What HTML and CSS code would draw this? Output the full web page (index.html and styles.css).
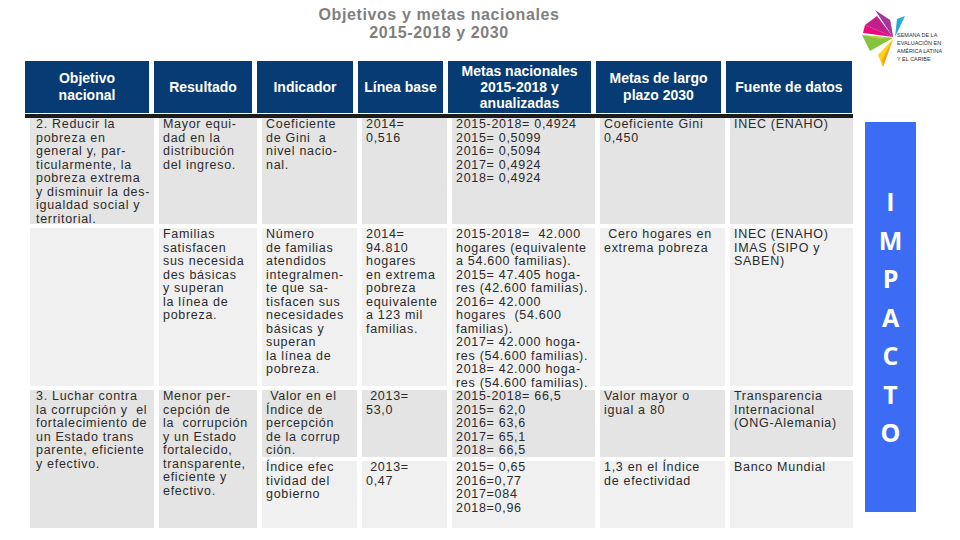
FILE: index.html
```html
<!DOCTYPE html>
<html lang="es">
<head>
<meta charset="utf-8">
<title>Objetivos y metas nacionales</title>
<link rel="stylesheet" href="styles.css">
</head>
<body>
<div class="slide">
  <main class="content">
    <h1 class="title">Objetivos y metas nacionales<br>2015-2018 y 2030</h1>
    <div class="thead">
      <div class="th">Objetivo<br>nacional</div>
      <div class="th">Resultado</div>
      <div class="th">Indicador</div>
      <div class="th">Línea base</div>
      <div class="th th-tight">Metas nacionales<br>2015-2018 y<br>anualizadas</div>
      <div class="th">Metas de largo<br>plazo 2030</div>
      <div class="th">Fuente de datos</div>
    </div>
    <div class="rule"></div>
    <div class="tbody">
      <div class="td first">2. Reducir la<br>pobreza en<br>general y, par-<br>ticularmente, la<br>pobreza extrema<br>y disminuir la des-<br>igualdad social y<br>territorial.</div>
      <div class="td">Mayor equi-<br>dad en la<br>distribución<br>del ingreso.</div>
      <div class="td">Coeficiente<br>de Gini&nbsp; a<br>nivel nacio-<br>nal.</div>
      <div class="td">2014=<br>0,516</div>
      <div class="td">2015-2018= 0,4924<br>2015= 0,5099<br>2016= 0,5094<br>2017= 0,4924<br>2018= 0,4924</div>
      <div class="td">Coeficiente Gini<br>0,450</div>
      <div class="td">INEC (ENAHO)</div>

      <div class="td light first"></div>
      <div class="td light">Familias<br>satisfacen<br>sus necesida<br>des básicas<br>y superan<br>la línea de<br>pobreza.</div>
      <div class="td light">Número<br>de familias<br>atendidos<br>integralmen-<br>te que sa-<br>tisfacen sus<br>necesidades<br>básicas y<br>superan<br>la línea de<br>pobreza.</div>
      <div class="td light">2014=<br>94.810<br>hogares<br>en extrema<br>pobreza<br>equivalente<br>a 123 mil<br>familias.</div>
      <div class="td light">2015-2018=&nbsp; 42.000<br>hogares (equivalente<br>a 54.600 familias).<br>2015= 47.405 hoga-<br>res (42.600 familias).<br>2016= 42.000<br>hogares&nbsp; (54.600<br>familias).<br>2017= 42.000 hoga-<br>res (54.600 familias).<br>2018= 42.000 hoga-<br>res (54.600 familias).</div>
      <div class="td light">&nbsp;Cero hogares en<br>extrema pobreza</div>
      <div class="td light">INEC (ENAHO)<br>IMAS (SIPO y<br>SABEN)</div>

      <div class="td first span2">3. Luchar contra<br>la corrupción y&nbsp; el<br>fortalecimiento de<br>un Estado trans<br>parente, eficiente<br>y efectivo.</div>
      <div class="td span2">Menor per-<br>cepción de<br>la&nbsp; corrupción<br>y un Estado<br>fortalecido,<br>transparente,<br>eficiente y<br>efectivo.</div>
      <div class="td">&nbsp;Valor en el<br>Índice de<br>percepción<br>de la corrup<br>ción.</div>
      <div class="td">&nbsp;2013=<br>53,0</div>
      <div class="td">2015-2018= 66,5<br>2015= 62,0<br>2016= 63,6<br>2017= 65,1<br>2018= 66,5</div>
      <div class="td">Valor mayor o<br>igual a 80</div>
      <div class="td">Transparencia<br>Internacional<br>(ONG-Alemania)</div>

      <div class="td light">Índice efec<br>tividad del<br>gobierno</div>
      <div class="td light">&nbsp;2013=<br>0,47</div>
      <div class="td light">2015= 0,65<br>2016=0,77<br>2017=084<br>2018=0,96</div>
      <div class="td light">1,3 en el Índice<br>de efectividad</div>
      <div class="td light">Banco Mundial</div>
    </div>
  </main>
  <aside class="side">
    <div class="logo">
      <svg class="logo-mark" width="42" height="64" viewBox="0 0 42 64" aria-hidden="true">
        <polygon points="10,17 22,8 38,29" fill="#c21f8c"/>
        <polygon points="8,25 10,17 38,29" fill="#ea0a7d"/>
        <polygon points="20,2 35,12 38,29" fill="#8e3fa8"/>
        <polygon points="24,6 35,12 38,29" fill="#a83597"/>
        <polygon points="42,11 50,8 40,29" fill="#27a9dd"/>
        <polygon points="7,27 15,43 38,30" fill="#86c440"/>
        <polygon points="7,27 24,31 38,30" fill="#b4d334"/>
        <polygon points="23,47 28,59 38,31" fill="#fcd21c"/>
        <polygon points="27,52 28,59 38,31" fill="#f7a11b"/>
      </svg>
      <div class="logo-text">SEMANA DE LA<br>EVALUACIÓN EN<br>AMÉRICA LATINA<br>Y EL CARIBE</div>
    </div>
    <div class="impact"><span>I</span><span>M</span><span>P</span><span>A</span><span>C</span><span>T</span><span>O</span></div>
  </aside>
</div>
</body>
</html>
```

FILE: styles.css
```css
html, body {
  margin: 0;
  padding: 0;
  background: #ffffff;
}

body {
  width: 960px;
  height: 540px;
  overflow: hidden;
  font-family: "Liberation Sans", Arial, sans-serif;
}

.slide {
  display: flex;
  align-items: flex-start;
}

.content {
  margin-left: 25px;
  width: 828px;
  flex: none;
}

.title {
  margin: 6px 0 0;
  font-size: 16px;
  line-height: 18px;
  letter-spacing: 0.6px;
  font-weight: bold;
  color: #7f7f7f;
  text-align: center;
}

.thead {
  margin-top: 19px;
  display: grid;
  grid-template-columns: 124px 98px 96px 85px 143px 125px 126px;
  column-gap: 5px;
  height: 52px;
}

.th {
  background: #073b73;
  color: #ffffff;
  font-weight: bold;
  font-size: 14px;
  line-height: 17px;
  display: flex;
  align-items: center;
  justify-content: center;
  text-align: center;
}

.th-tight {
  line-height: 16px;
}

.rule {
  height: 4px;
  margin-top: 1px;
  background: #1c1c1c;
}

.tbody {
  margin-left: 5px;
  display: grid;
  grid-template-columns: 124px 98px 95px 85px 143px 125px 123px;
  grid-template-rows: 106px 158px 67px 67px;
  column-gap: 5px;
  row-gap: 4px;
  font-size: 12.5px;
  line-height: 13.5px;
  letter-spacing: 0.7px;
  color: #2b2b2b;
}

.td {
  background: #e4e4e4;
  padding: 0 0 0 4px;
  white-space: nowrap;
}

.td.first {
  padding-left: 6px;
}

.td.light {
  background: #f0f0f0;
}

.span2 {
  grid-row: span 2;
}

.side {
  display: flex;
  flex-direction: column;
  padding-left: 2px;
  padding-top: 8px;
}

.logo {
  display: flex;
  align-items: flex-start;
  height: 64px;
}

.logo-mark {
  flex: none;
  overflow: visible;
}

.logo-text {
  margin-top: 23px;
  font-size: 5.5px;
  line-height: 8px;
  color: #2d2d3a;
  white-space: nowrap;
}

.impact {
  margin-top: 50px;
  margin-left: 10px;
  width: 51px;
  height: 390px;
  background: #3b6cf3;
  color: #ffffff;
  font-family: "Open Sans", "Liberation Sans", sans-serif;
  font-weight: bold;
  font-size: 25px;
  line-height: 38.5px;
  display: flex;
  flex-direction: column;
  align-items: center;
  justify-content: center;
}
```
